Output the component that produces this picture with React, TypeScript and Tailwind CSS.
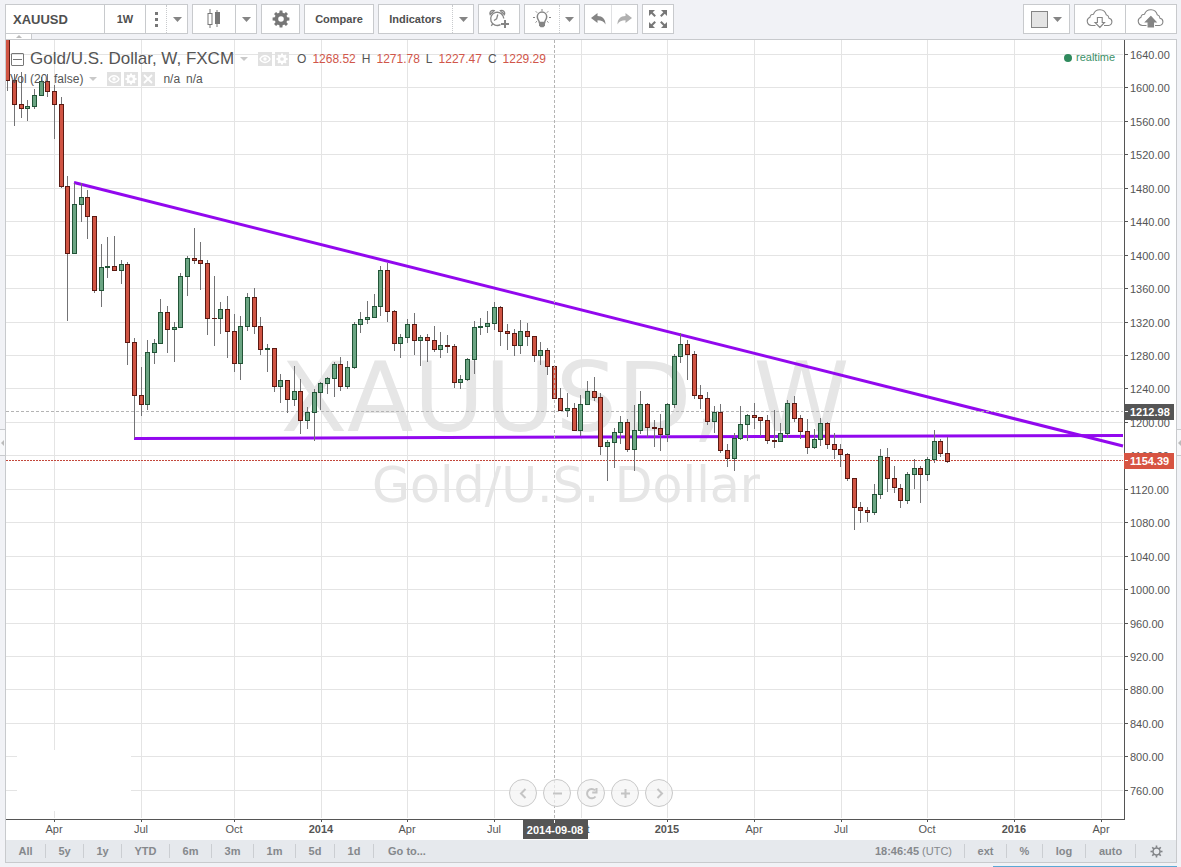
import { useState } from "react";
import clsx from "clsx";

// [high, body top, body bottom, low, rising]
type Candle = [number, number, number, number, 0 | 1];

const CANDLES: Candle[] = [
  [38, 38, 81, 91, 0], [74, 80, 105, 126, 0], [72, 104, 109, 118, 0], [100, 106, 109, 121, 1],
  [89, 95, 107, 109, 1], [77, 81, 96, 96, 1], [74, 81, 92, 97, 0], [85, 91, 105, 139, 0],
  [97, 104, 187, 188, 0], [176, 186, 254, 321, 0], [183, 204, 254, 254, 1], [183, 197, 205, 222, 1],
  [190, 197, 217, 239, 0], [216, 216, 291, 293, 0], [244, 267, 291, 307, 1], [237, 266, 268, 278, 1],
  [236, 266, 271, 271, 0], [260, 264, 271, 284, 1], [262, 264, 343, 365, 0], [338, 342, 396, 438, 0],
  [367, 395, 405, 416, 0], [340, 352, 405, 410, 1], [339, 343, 353, 364, 1], [299, 312, 344, 344, 1],
  [306, 312, 330, 353, 0], [322, 327, 330, 362, 1], [273, 276, 328, 328, 1], [256, 258, 277, 296, 1],
  [228, 258, 261, 264, 0], [242, 260, 264, 290, 0], [260, 263, 319, 335, 0], [276, 318, 319, 346, 0],
  [302, 309, 319, 334, 1], [296, 309, 332, 358, 0], [314, 331, 364, 372, 0], [316, 326, 364, 380, 1],
  [293, 297, 327, 331, 1], [288, 297, 327, 334, 0], [317, 326, 350, 355, 0], [344, 348, 350, 372, 1],
  [348, 348, 387, 392, 0], [374, 380, 387, 403, 1], [380, 380, 400, 413, 0], [366, 391, 400, 406, 1],
  [379, 391, 421, 434, 0], [407, 412, 421, 429, 1], [389, 392, 413, 441, 1], [382, 383, 393, 410, 1],
  [377, 378, 384, 394, 1], [362, 364, 379, 397, 1], [357, 364, 387, 391, 0], [361, 367, 387, 389, 1],
  [322, 324, 368, 369, 1], [312, 319, 325, 333, 1], [301, 317, 320, 324, 1], [294, 306, 318, 318, 1],
  [266, 270, 307, 316, 1], [263, 270, 312, 322, 0], [310, 311, 344, 351, 0], [334, 337, 344, 358, 1],
  [319, 324, 338, 343, 1], [313, 324, 341, 355, 0], [335, 337, 341, 366, 1], [334, 337, 341, 362, 0],
  [326, 340, 350, 352, 0], [332, 345, 350, 358, 1], [335, 345, 347, 353, 0], [344, 346, 383, 388, 0],
  [375, 379, 383, 389, 1], [358, 359, 380, 381, 1], [321, 327, 360, 374, 1], [318, 326, 328, 335, 1],
  [311, 323, 327, 333, 1], [302, 307, 324, 330, 1], [306, 307, 332, 346, 0], [324, 331, 334, 350, 0],
  [329, 333, 346, 356, 0], [320, 331, 346, 354, 1], [323, 331, 337, 346, 0], [336, 336, 356, 362, 0],
  [342, 350, 356, 365, 1], [348, 350, 367, 375, 0], [366, 366, 399, 399, 0], [388, 398, 411, 411, 0],
  [393, 408, 411, 417, 1], [403, 408, 431, 431, 0], [395, 404, 431, 436, 1], [381, 391, 405, 405, 1],
  [377, 391, 398, 401, 0], [393, 397, 447, 455, 0], [440, 442, 447, 481, 1], [428, 432, 443, 468, 1],
  [416, 422, 433, 444, 1], [419, 422, 450, 452, 0], [405, 430, 450, 471, 1], [391, 404, 431, 434, 1],
  [403, 404, 428, 437, 0], [420, 427, 429, 447, 0], [414, 428, 435, 451, 0], [403, 404, 435, 442, 1],
  [354, 356, 405, 408, 1], [333, 344, 357, 363, 1], [340, 344, 355, 380, 0], [351, 354, 396, 399, 0],
  [385, 395, 399, 409, 0], [392, 398, 422, 425, 0], [406, 412, 422, 433, 1], [404, 412, 451, 453, 0],
  [444, 450, 459, 467, 0], [433, 438, 459, 471, 1], [406, 424, 439, 440, 1], [414, 415, 425, 441, 1],
  [403, 415, 418, 429, 0], [417, 417, 421, 436, 0], [415, 420, 441, 444, 0], [410, 440, 442, 448, 0],
  [423, 433, 442, 442, 1], [400, 403, 434, 438, 1], [396, 403, 419, 422, 0], [415, 418, 432, 439, 0],
  [419, 431, 448, 454, 0], [429, 439, 448, 449, 1], [418, 423, 440, 446, 1], [422, 423, 445, 449, 0],
  [433, 444, 450, 459, 0], [444, 449, 455, 467, 0], [453, 454, 479, 481, 0], [478, 478, 508, 530, 0],
  [502, 507, 511, 523, 0], [507, 510, 513, 522, 0], [484, 494, 513, 515, 1], [449, 456, 495, 499, 1],
  [448, 457, 479, 492, 0], [466, 478, 488, 493, 0], [484, 488, 501, 508, 0], [472, 474, 501, 504, 1],
  [459, 468, 475, 489, 1], [466, 468, 475, 503, 0], [457, 459, 475, 481, 1], [430, 441, 460, 463, 1],
  [439, 441, 454, 457, 0], [437, 453, 462, 463, 0],
];

const MONTHS = [
  { x: 54, label: "Apr" },
  { x: 141, label: "Jul" },
  { x: 234, label: "Oct" },
  { x: 321, label: "2014" },
  { x: 407, label: "Apr" },
  { x: 494, label: "Jul" },
  { x: 581, label: "Oct" },
  { x: 667, label: "2015" },
  { x: 754, label: "Apr" },
  { x: 841, label: "Jul" },
  { x: 927, label: "Oct" },
  { x: 1014, label: "2016" },
  { x: 1101, label: "Apr" },
];

const PRICES = Array.from({ length: 23 }, (_, i) => ({
  y: Math.floor(54.4 + i * 33.45),
  label: (1640 - i * 40).toFixed(2),
}));

const RANGES = [
  { label: "All", width: "w-[40px]" },
  { label: "5y", width: "w-[38px]" },
  { label: "1y", width: "w-[38px]" },
  { label: "YTD", width: "w-[48px]" },
  { label: "6m", width: "w-[42px]" },
  { label: "3m", width: "w-[42px]" },
  { label: "1m", width: "w-[42px]" },
  { label: "5d", width: "w-[39px]" },
  { label: "1d", width: "w-[39px]" },
  { label: "Go to...", width: "w-[66px]" },
];

const SCALES = [
  { label: "ext", width: "w-[42px]" },
  { label: "%", width: "w-[36px]" },
  { label: "log", width: "w-[43px]" },
  { label: "auto", width: "w-[50px]" },
];

const OHLC = [
  ["O", "1268.52"],
  ["H", "1271.78"],
  ["L", "1227.47"],
  ["C", "1229.29"],
];

const group = "flex h-[30px] border border-[#c8cacd] bg-white";
const cell = "flex h-full items-center justify-center";

const Caret = () => (
  <svg width="9" height="5" viewBox="0 0 9 5" fill="#858585">
    <path d="M0 0h9L4.500 5z" />
  </svg>
);

const SmallCaret = () => (
  <svg width="8" height="4" viewBox="0 0 8 4" fill="#c9c9c9">
    <path d="M0 0h8L4 4z" />
  </svg>
);

const GearIcon = ({ size, color }: { size: number; color: string }) => (
  <svg width={size} height={size} viewBox="0 0 18 18" fill="none">
    <circle cx="9" cy="9" r="4.600" stroke={color} strokeWidth="3.600" />
    {[0, 45, 90, 135, 180, 225, 270, 315].map((a) => (
      <path key={a} d="M7.300 3.500L7.600 0.600h2.800L10.700 3.500z" fill={color} transform={`rotate(${a} 9 9)`} />
    ))}
  </svg>
);

const CandlesIcon = () => (
  <svg width="14" height="20" viewBox="0 0 14 20" fill="none">
    <path d="M3 0v4M3 16v3M10 1v17" stroke="#777" />
    <rect x="1" y="4.500" width="4" height="11" stroke="#777" />
    <rect x="8" y="3" width="5" height="12" fill="#777" />
  </svg>
);

const AlarmIcon = () => (
  <svg width="20" height="20" viewBox="0 0 20 20" fill="none" stroke="#858585" strokeWidth="1.300">
    <path d="M11.500 15.600A6.600 6.600 0 1 1 14.800 9.500" />
    <path d="M1.200 5.500A3 3 0 0 1 5.200 1.600zM11.400 1.600A3 3 0 0 1 15.400 5.500z" />
    <path d="M8.800 5.500L7.600 9.800L5 11.500" />
    <path d="M3.800 14.600L2.300 16.800" />
    <path d="M16 11v8M12 15h8" strokeWidth="2" />
  </svg>
);

const BulbIcon = () => (
  <svg width="20" height="20" viewBox="0 0 20 20" fill="none" stroke="#858585">
    <path d="M7.300 13.500C7.300 11.500 5.300 10.600 5.300 7.800a4.700 4.700 0 0 1 9.400 0c0 2.800-2 3.700-2 5.700z" strokeWidth="1.500" />
    <path d="M7 14h6v2.600l-1.500 1.600h-3L7 16.600z" fill="#858585" stroke="none" />
    <path d="M10 0v2M3.800 2.300l1.300 1.400M16.200 2.300l-1.300 1.400M1 8.500h2M17 8.500h2M3.500 13.500l1.400-1.200M16.500 13.500l-1.400-1.200" />
  </svg>
);

const UndoIcon = ({ color }: { color: string }) => (
  <svg width="15" height="12" viewBox="0 0 15 12" fill={color}>
    <path d="M0 5L6.500 0v3C11.500 3 14.500 6 14.500 11.500C13 8.500 10.500 7.200 6.500 7.200V10z" />
  </svg>
);

const ExpandIcon = () => (
  <svg width="18" height="18" viewBox="0 0 18 18" fill="#777" stroke="#777">
    {[0, 90, 180, 270].map((a) => (
      <g key={a} transform={`rotate(${a} 9 9)`}>
        <path d="M0 0h6L0 6z" stroke="none" />
        <path d="M2 2L6.200 6.200" strokeWidth="2" />
      </g>
    ))}
  </svg>
);

const CloudIcon = ({ up }: { up?: boolean }) => (
  <svg width="28" height="20" viewBox="0 0 28 20" fill="none" stroke="#858585" strokeWidth="1.100">
    <path d="M9.500 16.500H5.500A4.300 4.300 0 0 1 4 8.200A3.200 3.200 0 0 1 7.500 5.200A6.700 6.700 0 0 1 20.300 5.800A4 4 0 0 1 23 9.200A3.700 3.700 0 0 1 22.500 16.500H18" />
    {up ? (
      <path d="M13.800 7.500L19 13h-2.500v5h-5.400v-5H8.500z" fill="#858585" />
    ) : (
      <path d="M13.800 18.500L18.500 13.500h-2.300v-5h-4.800v5H9z" />
    )}
  </svg>
);

const EyeIcon = () => (
  <svg width="12" height="10" viewBox="0 0 12 10" fill="none" stroke="#fff" strokeWidth="1.500">
    <path d="M1 5C3 0.500 9 0.500 11 5C9 9.500 3 9.500 1 5z" />
    <circle cx="6" cy="5" r="1" />
  </svg>
);

const CloseIcon = () => (
  <svg width="10" height="10" viewBox="0 0 10 10" stroke="#fff" strokeWidth="1.800">
    <path d="M1 1l8 8M9 1l-8 8" />
  </svg>
);

function LegendButton({ label, children }: { label: string; children: React.ReactNode }) {
  return (
    <button aria-label={label} className="flex size-[14px] items-center justify-center bg-[#e1e1e1]">
      {children}
    </button>
  );
}

function Toolbar() {
  const [symbol, setSymbol] = useState("XAUUSD");

  return (
    <header className="flex items-start justify-between pt-1 text-[12px] font-bold text-[#4f4f4f]">
      <div className="flex gap-1">
        <div className={group}>
          <input
            aria-label="Symbol"
            value={symbol}
            onChange={(e) => setSymbol(e.target.value)}
            className="w-[98px] pt-px pl-[7px] text-[13px] outline-none"
          />
          <button className={clsx(cell, "w-[41px] border-l border-[#c8cacd] text-[11px]")}>1W</button>
          <button aria-label="Intervals" className={clsx(cell, "w-[21px] border-l border-[#c8cacd]")}>
            <svg width="3" height="15" viewBox="0 0 3 15" fill="#777">
              <path d="M0 0h3v3H0zM0 6h3v3H0zM0 12h3v3H0z" />
            </svg>
          </button>
          <button aria-label="More intervals" className={clsx(cell, "w-[21px] border-l border-dotted border-[#c8cacd]")}>
            <Caret />
          </button>
        </div>
        <div className={group}>
          <button aria-label="Bar style" className={clsx(cell, "w-[42px]")}>
            <CandlesIcon />
          </button>
          <button aria-label="More bar styles" className={clsx(cell, "w-[21px] border-l border-[#c8cacd]")}>
            <Caret />
          </button>
        </div>
        <div className={group}>
          <button aria-label="Properties" className={clsx(cell, "w-[37px]")}>
            <GearIcon size={18} color="#777" />
          </button>
        </div>
        <div className={group}>
          <button className={clsx(cell, "w-[68px] text-[11px]")}>Compare</button>
        </div>
        <div className={group}>
          <button className={clsx(cell, "w-[73px] text-[11px]")}>Indicators</button>
          <button aria-label="More indicators" className={clsx(cell, "w-[21px] border-l border-dotted border-[#c8cacd]")}>
            <Caret />
          </button>
        </div>
        <div className={group}>
          <button aria-label="Add alert" className={clsx(cell, "w-[40px]")}>
            <AlarmIcon />
          </button>
        </div>
        <div className={group}>
          <button aria-label="Ideas" className={clsx(cell, "w-[34px]")}>
            <BulbIcon />
          </button>
          <button aria-label="More ideas" className={clsx(cell, "w-[20px] border-l border-dotted border-[#c8cacd]")}>
            <Caret />
          </button>
        </div>
        <div className={group}>
          <button aria-label="Undo" className={clsx(cell, "w-[26px]")}>
            <UndoIcon color="#858585" />
          </button>
          <button aria-label="Redo" className={clsx(cell, "w-[26px] border-l border-[#e0e1e3]")}>
            <span className="-scale-x-100">
              <UndoIcon color="#b0b0b0" />
            </span>
          </button>
        </div>
        <div className={group}>
          <button aria-label="Fullscreen" className={clsx(cell, "w-[30px]")}>
            <ExpandIcon />
          </button>
        </div>
      </div>

      <div className="flex gap-1">
        <div className={group}>
          <button aria-label="Layout" className={clsx(cell, "w-[45px] gap-[5px]")}>
            <span className="size-[17px] border border-[#858585] bg-[#e4e4e4]" />
            <Caret />
          </button>
        </div>
        <div className={group}>
          <button aria-label="Load chart" className={clsx(cell, "w-[50px]")}>
            <CloudIcon />
          </button>
          <button aria-label="Save chart" className={clsx(cell, "w-[51px] border-l border-[#c8cacd]")}>
            <CloudIcon up />
          </button>
        </div>
      </div>
    </header>
  );
}

function PriceChart() {
  return (
    <svg viewBox="6 40 1170 800" className="block h-auto w-full" role="img" aria-label="Gold/U.S. Dollar weekly chart">
      <g fontFamily="'DejaVu Sans', sans-serif" textAnchor="middle" fill="#e6e6e6">
        <text x="565" y="431" fontSize="97">XAUUSD, W</text>
        <text x="566" y="502" fontSize="49">Gold/U.S. Dollar</text>
      </g>

      {/* Grid */}
      <g fill="#e4e4e4">
        {PRICES.map((p) => (
          <rect key={p.label} x="6" y={p.y} width="1117" height="1" />
        ))}
        {MONTHS.map((m) => (
          <rect key={m.x} x={m.x} y="40" width="1" height="778" />
        ))}
      </g>
      <rect x="17" y="750" width="114" height="61" fill="#fff" />

      {/* Trend lines */}
      <g stroke="#9208ee" strokeWidth="3">
        <path d="M74 182.500L1123 446" />
        <path d="M134 438.500L1123 435.500" />
      </g>

      {/* Crosshair and last price */}
      <path d="M6 411.500H1123" stroke="#b4b4b4" strokeDasharray="3 2" />
      <path d="M6 460.500H1123" stroke="#c2483c" strokeDasharray="2 1" />

      {/* Candles */}
      <g shapeRendering="crispEdges">
        {CANDLES.map(([high, top, bottom, low, up], i) => {
          const x = Math.floor(7.700 + i * 6.665);
          const border = up ? "#225437" : "#5b1a13";
          return (
            <g key={i}>
              <rect x={x} y={high} width="1" height={low - high} fill="#737375" />
              <rect x={x - 2} y={top} width="5" height={bottom - top} fill={border} />
              {bottom - top > 2 && (
                <rect x={x - 1} y={top + 1} width="3" height={bottom - top - 2} fill={up ? "#6ba583" : "#d05443"} />
              )}
            </g>
          );
        })}
      </g>
      <path d="M554.500 40V819" stroke="#b4b4b4" strokeDasharray="3 2" />

      {/* Axes */}
      <g fill="#555">
        <rect x="1124" y="40" width="1" height="780" />
        <rect x="6" y="819" width="1119" height="1" />
        {PRICES.map((p) => (
          <rect key={p.label} x="1125" y={p.y} width="3" height="1" />
        ))}
        {MONTHS.map((m) => (
          <rect key={m.x} x={m.x} y="820" width="1" height="2" />
        ))}
      </g>
      <g fill="#555" fontSize="11">
        {PRICES.map((p) => (
          <text key={p.label} x="1130" y={p.y + 5}>{p.label}</text>
        ))}
        {MONTHS.map((m) => (
          <text
            key={m.x}
            x={m.x}
            y="833"
            textAnchor="middle"
            fontWeight={m.label.startsWith("20") ? 700 : 400}
          >
            {m.label}
          </text>
        ))}
      </g>

      {/* Axis markers */}
      <rect x="1124" y="404" width="50" height="16" fill="#555" />
      <rect x="1124" y="453" width="50" height="16" fill="#d75442" />
      <rect x="523" y="820" width="65" height="19" fill="#555" />
      <path d="M1125 411.500h3M1125 460.500h3M554.500 820v3" stroke="#fff" />
      <g fill="#fff" fontSize="11" fontWeight="700">
        <text x="1130" y="416">1212.98</text>
        <text x="1130" y="465">1154.39</text>
        <text x="555" y="834" textAnchor="middle">2014-09-08</text>
      </g>

      <circle cx="1068" cy="58" r="4" fill="#2f8a5d" />
      <text x="1076" y="61" fontSize="11" fill="#3c9169">realtime</text>
    </svg>
  );
}

function Legend() {
  return (
    <div className="absolute top-2 left-1 text-[12px] text-[#555]">
      <div className="flex h-[22px] items-center">
        <button aria-label="Collapse legend" className="ml-px flex size-[13px] items-center justify-center rounded-[1px] border border-[#777]">
          <span className="h-px w-[9px] bg-[#777]" />
        </button>
        <span className="ml-[6px] text-[17px]">Gold/U.S. Dollar, W, FXCM</span>
        <span className="ml-[6px]">
          <SmallCaret />
        </span>
        <div className="ml-[10px] flex gap-[3px]">
          <LegendButton label="Hide series"><EyeIcon /></LegendButton>
          <LegendButton label="Series settings"><GearIcon size={12} color="#fff" /></LegendButton>
        </div>
        <div className="ml-2 flex gap-[6px]">
          {OHLC.map(([key, value]) => (
            <span key={key} className="flex gap-[6px]">
              {key} <span className="text-[#d0564a]">{value}</span>
            </span>
          ))}
        </div>
      </div>
      <div className="flex h-[18px] items-center">
        <span>Vol (20, false)</span>
        <span className="ml-[6px]">
          <SmallCaret />
        </span>
        <div className="ml-[10px] flex gap-[3px]">
          <LegendButton label="Hide volume"><EyeIcon /></LegendButton>
          <LegendButton label="Volume settings"><GearIcon size={12} color="#fff" /></LegendButton>
          <LegendButton label="Remove volume"><CloseIcon /></LegendButton>
        </div>
        <span className="ml-2">n/a</span>
        <span className="ml-[6px]">n/a</span>
      </div>
    </div>
  );
}

const NAV = [
  { label: "Scroll left", d: "M8.500 2L4 6.500L8.500 11" },
  { label: "Zoom out", d: "M2 6.500h9" },
  { label: "Reset", d: "M10.500 9.500A4.700 4.700 0 1 1 10 3.200M11.500 1v4.500H7.200" },
  { label: "Zoom in", d: "M2 6.500h9M6.500 2v9" },
  { label: "Scroll right", d: "M4.500 2L9 6.500L4.500 11" },
];

function BottomBar() {
  return (
    <footer className="flex h-[22px] items-center justify-between bg-[#e6e9ed] text-[11px] font-bold text-[#85888c]">
      <div className="flex divide-x divide-[#cbced2]">
        {RANGES.map((r) => (
          <button key={r.label} className={clsx("h-[14px] leading-[14px]", r.width)}>
            {r.label}
          </button>
        ))}
      </div>
      <div className="flex divide-x divide-[#cbced2]">
        <span className="pr-3 leading-[14px]">
          18:46:45 <span className="font-normal">(UTC)</span>
        </span>
        {SCALES.map((s) => (
          <button key={s.label} className={clsx("h-[14px] leading-[14px]", s.width)}>
            {s.label}
          </button>
        ))}
        <button aria-label="Scale settings" className="flex h-[14px] w-[40px] items-center justify-center">
          <svg width="13" height="13" viewBox="0 0 13 13" fill="none" stroke="#808387">
            <circle cx="6.500" cy="6.500" r="3.500" strokeWidth="1.500" />
            {[0, 45, 90, 135, 180, 225, 270, 315].map((a) => (
              <path key={a} d="M6.500 0.500v2.200" strokeWidth="1.600" transform={`rotate(${a} 6.500 6.500)`} />
            ))}
          </svg>
        </button>
      </div>
    </footer>
  );
}

export default function App() {
  return (
    <div className="relative flex min-h-screen flex-col bg-[#f1f2f6] pr-1 pl-[5px] font-['Liberation_Sans',Arial,sans-serif]">
      <Toolbar />
      <button aria-label="Hide toolbar" className="flex h-[5px] w-[27px] items-center justify-center border-x border-[#c8cacd] bg-white">
        <svg width="6" height="3" viewBox="0 0 6 3" fill="#bbb">
          <path d="M0 3h6L3 0z" />
        </svg>
      </button>

      <main className="border border-[#c8cacd] bg-white">
        <div className="relative">
          <PriceChart />
          <Legend />
          <nav className="absolute inset-x-0 bottom-[33px] flex justify-center gap-[6px]">
            {NAV.map((n) => (
              <button
                key={n.label}
                aria-label={n.label}
                className="flex size-[28px] items-center justify-center rounded-full border border-[#c9c9c9] bg-[#f4f4f4]/70"
              >
                <svg width="13" height="13" viewBox="0 0 13 13" fill="none" stroke="#c4c4c4" strokeWidth="2">
                  <path d={n.d} />
                </svg>
              </button>
            ))}
          </nav>
        </div>
        <BottomBar />
      </main>
      <div className="mt-auto h-px w-[184px] self-end bg-[#5aa9d6]" />

      {/* Side panel handles */}
      <button aria-label="Show drawing tools" className="absolute top-[429px] left-0 flex h-[27px] w-[5px] items-center justify-center border-y border-[#c8cacd] bg-[#f7f8fa]">
        <svg width="3" height="6" viewBox="0 0 3 6" fill="#bbb">
          <path d="M3 0v6L0 3z" />
        </svg>
      </button>
      <button aria-label="Show side panel" className="absolute top-[429px] right-0 flex h-[27px] w-[4px] items-center justify-center border-y border-[#c8cacd] bg-[#f7f8fa]">
        <svg width="3" height="6" viewBox="0 0 3 6" fill="#bbb">
          <path d="M3 0v6L0 3z" />
        </svg>
      </button>
    </div>
  );
}
